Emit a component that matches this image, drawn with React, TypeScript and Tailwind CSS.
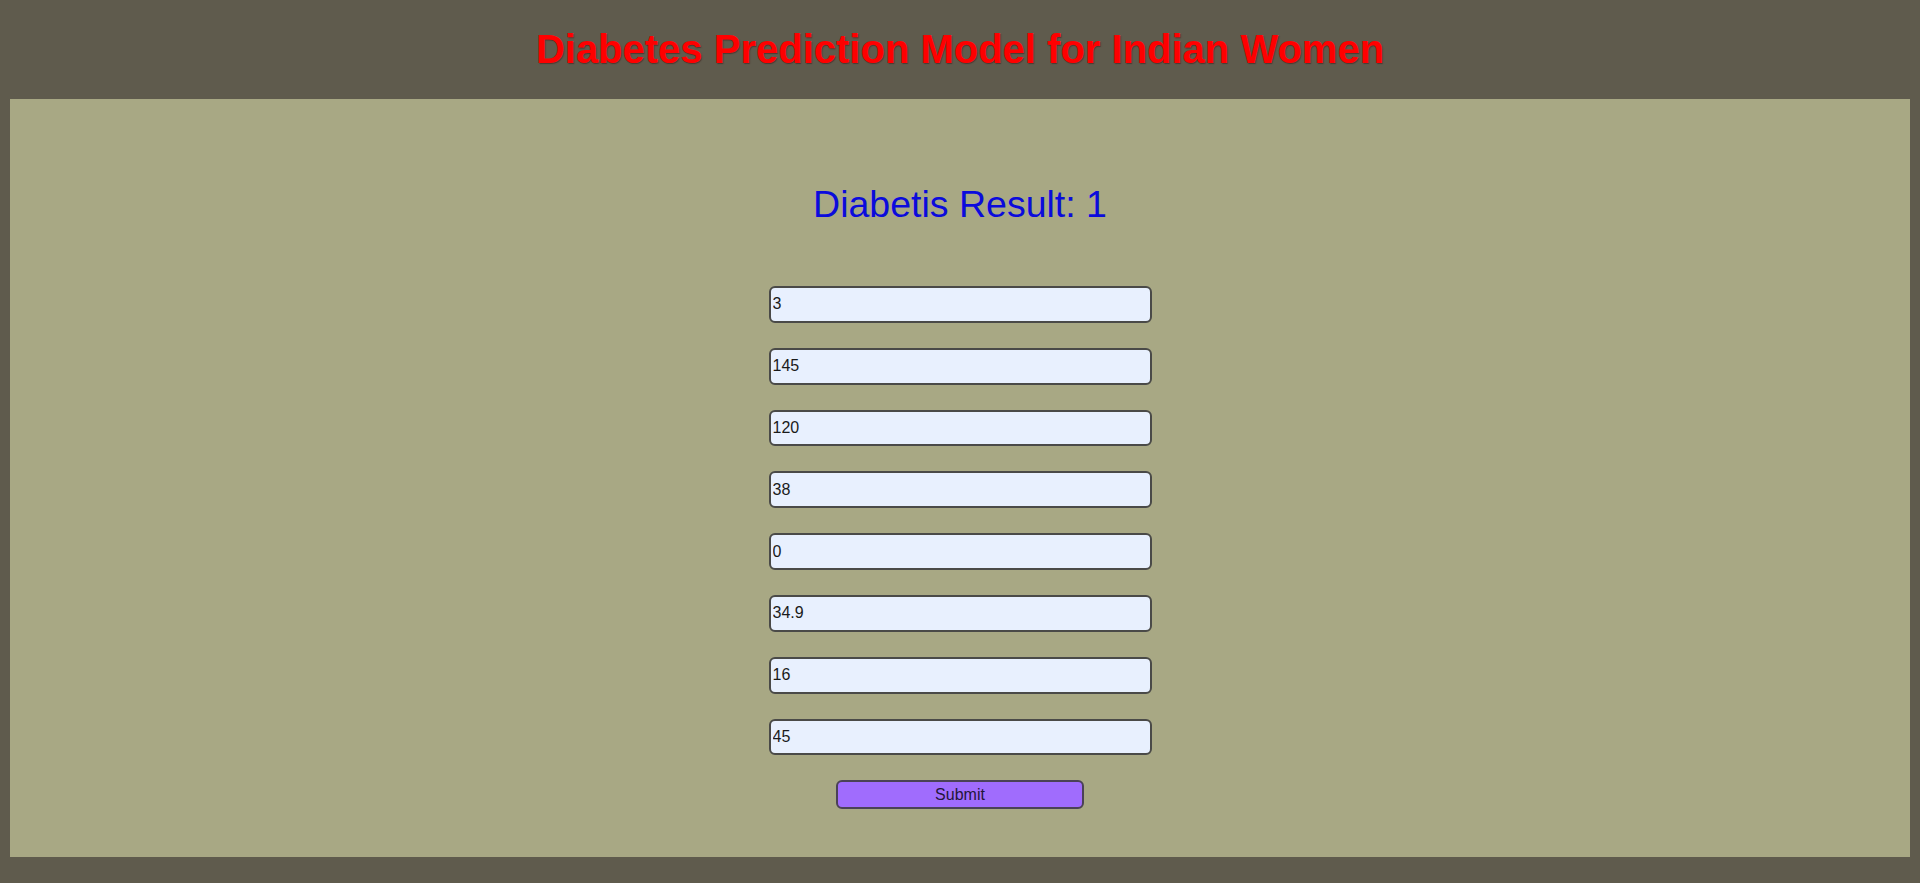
import { useState } from "react"

const fields = [
  { name: "pregnancies", value: "3" },
  { name: "glucose", value: "145" },
  { name: "bloodPressure", value: "120" },
  { name: "skinThickness", value: "38" },
  { name: "insulin", value: "0" },
  { name: "bmi", value: "34.9" },
  { name: "pedigree", value: "16" },
  { name: "age", value: "45" },
]

export default function App() {
  const [values, setValues] = useState<Record<string, string>>(
    Object.fromEntries(fields.map((f) => [f.name, f.value])),
  )

  return (
    <div className="min-h-[883px] bg-[#5f5b4d] font-['Liberation_Sans',Arial,sans-serif]">
      {/* header */}
      <h1 className="py-[27px] text-center text-[40px] font-bold leading-[45px] text-[#ff0000] [text-shadow:1px_1px_1px_rgba(60,20,20,0.5)]">
        Diabetes Prediction Model for Indian Women
      </h1>

      {/* result panel */}
      <div className="mx-[10px] flex h-[758px] flex-col items-center bg-[#a8a884] pt-[83.5px]">
        <h2 className="text-[37.5px] leading-[43px] text-[#0b0bdc]">Diabetis Result: 1</h2>

        <form className="mt-[60.5px] flex flex-col items-center gap-[25px]" onSubmit={(e) => e.preventDefault()}>
          {fields.map((field) => (
            <input
              key={field.name}
              name={field.name}
              type="text"
              value={values[field.name]}
              onChange={(e) => setValues({ ...values, [field.name]: e.target.value })}
              className="h-[36.8px] w-[383px] rounded-[6px] border-2 border-[#4a4a48] bg-[#e8f0fe] px-[2px] text-[16px] text-[#1a1a1a] outline-none"
            />
          ))}
          <button
            type="submit"
            className="h-[29px] w-[248px] rounded-[6px] border-2 border-[#4b4256] bg-[#a06cfd] text-[16px] text-[#24163a]"
          >
            Submit
          </button>
        </form>
      </div>
    </div>
  )
}
